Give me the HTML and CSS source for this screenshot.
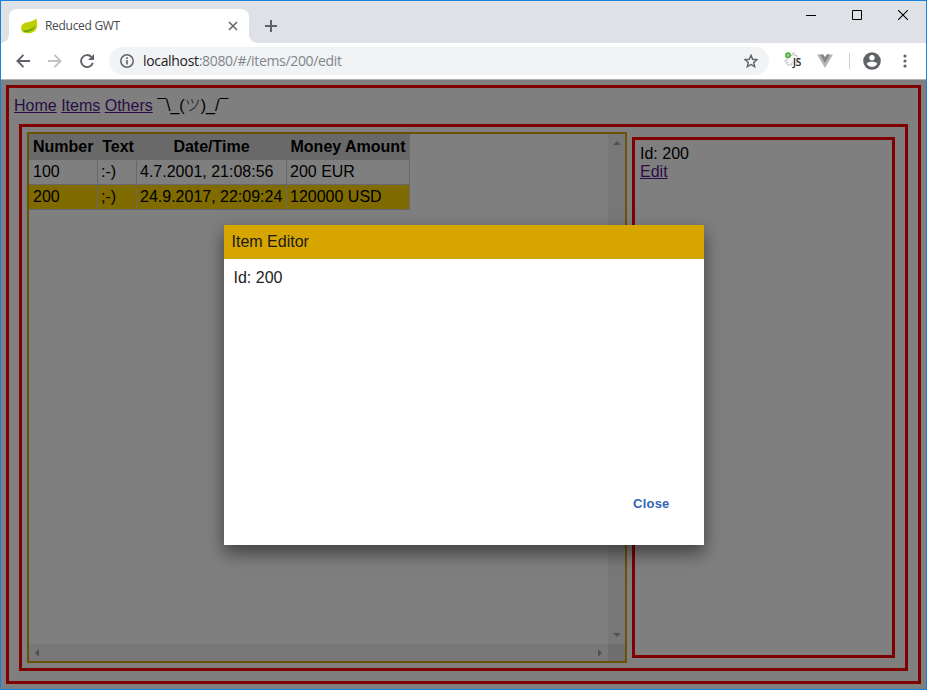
FILE: index.html
```
<!DOCTYPE html>
<html lang="en">
<head>
<meta charset="utf-8">
<title>Reduced GWT</title>
<link rel="stylesheet" href="styles.css">
</head>
<body>
<div class="window">
  <header class="titlebar">
    <div class="tab">
      <svg class="leaf" width="18" height="18" viewBox="0 0 18 18"><path d="M15.300 1.200c.9 3.600 1.700 9.300-.9 12.200-2.300 2.600-6.700 3-10.300 2.700C1.200 15.500-.3 13 .2 9.700 1.200 3.700 10.800 6.500 15.300 1.200z" fill="#bed000"/><path d="M2 13.600c5.200.2 10.500-1.700 12.500-6-1 5-5.200 7.700-10.800 7.300z" fill="#5d9b1f"/></svg>
      <span class="tab-title">Reduced GWT</span>
      <svg class="tab-close" width="10" height="10" viewBox="0 0 10 10"><path d="M1 1l8 8M9 1L1 9" stroke="#5f6368" stroke-width="1.500"/></svg>
    </div>
    <svg class="new-tab" width="12" height="12" viewBox="0 0 12 12"><path d="M6 0v12M0 6h12" stroke="#5f6368" stroke-width="2"/></svg>
    <div class="controls">
      <svg width="10" height="10" viewBox="0 0 10 10"><path d="M0 5.500h10" stroke="#000"/></svg>
      <svg width="10" height="10" viewBox="0 0 10 10"><path d="M.5.5h9v9h-9z" fill="none" stroke="#000"/></svg>
      <svg width="10" height="10" viewBox="0 0 10 10"><path d="M0 0l10 10M10 0L0 10" stroke="#000" stroke-width="1.100"/></svg>
    </div>
  </header>
  <div class="toolbar">
    <div class="nav-icons">
      <svg width="14" height="14" viewBox="0 0 14 14"><path d="M14 7H1.500M7.500.8L1.400 7l6.100 6.200" fill="none" stroke="#5f6368" stroke-width="1.900"/></svg>
      <svg width="14" height="14" viewBox="0 0 14 14"><path d="M0 7h12.500M6.500.8L12.600 7l-6.100 6.200" fill="none" stroke="#bfc1c3" stroke-width="1.900"/></svg>
      <svg width="14" height="14" viewBox="0 0 14 14"><path d="M12.800 8.900A6 6 0 1 1 11.400 2.900" fill="none" stroke="#5f6368" stroke-width="1.900"/><path d="M14 0v6H8z" fill="#5f6368"/></svg>
    </div>
    <div class="address">
      <svg width="14" height="14" viewBox="0 0 14 14"><circle cx="7" cy="7" r="6.200" fill="none" stroke="#5f6368" stroke-width="1.500"/><path d="M7 6v4.500M7 3.300v1.600" stroke="#5f6368" stroke-width="1.600"/></svg>
      <span class="url">localhost<span class="path">:8080/#/items/200/edit</span></span>
      <svg class="star" width="14" height="14" viewBox="0 0 14 14"><path d="M7 1.300l1.700 4 4.300.4-3.300 2.800 1 4.200L7 10.500l-3.700 2.200 1-4.200L1 5.700l4.300-.4z" fill="none" stroke="#5f6368" stroke-width="1.400"/></svg>
    </div>
    <svg class="ext-js" width="18" height="18" viewBox="0 0 18 18"><path d="M6 3.500h2.500q-.8-2.500 1-2.500t1 2.500H13V7q2.500-.8 2.500 1T13 9v4h-3q.5-2.500-1.200-2.500T8 13H3v-3q-2 .5-2-1t2-1V6" fill="#f7f7f7" stroke="#b0b0b0" stroke-dasharray="2 .7"/><circle cx="4" cy="3.300" r="3" fill="#4faf3d"/><circle cx="4" cy="3.300" r="1.500" fill="#8fd280"/><text x="9" y="14" class="js-label">JS</text></svg>
    <svg class="ext-vue" width="16" height="14" viewBox="0 0 16 14"><path d="M0 .5h6l2 3 2-3h6L8 14z" fill="#b5b5b5"/><path d="M3 .5h3.300L8 3.500 9.700.5H13L8 9z" fill="#858585"/></svg>
    <span class="divider"></span>
    <svg class="avatar" width="18" height="18" viewBox="0 0 18 18"><circle cx="9" cy="9" r="8.800" fill="#5f6368"/><circle cx="9" cy="5.700" r="2.700" fill="#fff"/><path d="M3.700 11.700C5 9.200 13 9.200 14.300 11.700 12.500 15.800 5.500 15.800 3.700 11.700z" fill="#fff"/></svg>
    <svg class="more" width="4" height="14" viewBox="0 0 4 14"><g fill="#5f6368"><circle cx="2" cy="2" r="1.600"/><circle cx="2" cy="7" r="1.600"/><circle cx="2" cy="12" r="1.600"/></g></svg>
  </div>
  <main class="page">
    <div class="app">
      <nav><a href="#">Home</a> <a href="#">Items</a> <a href="#">Others</a> <span class="shrug">¯\_(<span class="face">ツ</span>)_/¯</span></nav>
      <div class="content">
        <div class="list">
          <div class="list-body">
            <table>
              <colgroup><col class="c-number"><col class="c-text"><col class="c-date"><col class="c-money"></colgroup>
              <tr><th>Number</th><th>Text</th><th>Date/Time</th><th>Money Amount</th></tr>
              <tr><td>100</td><td>:-)</td><td>4.7.2001, 21:08:56</td><td>200 EUR</td></tr>
              <tr class="selected"><td>200</td><td>;-)</td><td>24.9.2017, 22:09:24</td><td>120000 USD</td></tr>
            </table>
          </div>
          <div class="vscroll"><i class="arrow up"></i><i class="arrow down"></i></div>
          <div class="hscroll"><i class="arrow left"></i><i class="arrow right"></i></div>
          <div class="corner"></div>
        </div>
        <div class="detail">Id: 200<br><a href="#">Edit</a></div>
      </div>
    </div>
    <div class="backdrop">
      <section class="dialog">
        <h1>Item Editor</h1>
        <div class="dialog-body">Id: 200</div>
        <footer><button>Close</button></footer>
      </section>
    </div>
  </main>
</div>
</body>
</html>
```
FILE: styles.css
```
* { box-sizing: border-box; }
body { margin: 0; font: 16px/18px "Liberation Sans", Arial, sans-serif; color: #000; overflow: hidden; }
svg { display: block; flex: none; }
a { color: #551a8b; }
.window { width: 927px; height: 690px; border: 1px solid #1a80d8; display: flex; flex-direction: column; }

.titlebar { height: 42px; background: #dee1e6; display: flex; align-items: flex-end; padding-left: 8px; }
.tab { width: 240px; height: 34px; background: #fff; border-radius: 8px 8px 0 0; display: flex; align-items: center; padding: 0 11px 0 12px; position: relative; }
.tab::before, .tab::after { content: ""; position: absolute; bottom: 0; width: 8px; height: 8px; }
.tab::before { left: -8px; background: radial-gradient(circle at 0 0, #dee1e6 7.5px, #fff 8px); }
.tab::after { right: -8px; background: radial-gradient(circle at 100% 0, #dee1e6 7.5px, #fff 8px); }
.tab-title { font: 12px/16px "Open Sans", sans-serif; letter-spacing: -.3px; color: #45494d; margin-left: 6px; flex: 1; }
.new-tab { margin: 0 0 11px 16px; }
.controls { margin-left: auto; align-self: flex-start; display: flex; gap: 36px; padding: 9px 18px 0 0; }

.toolbar { height: 37px; background: #fff; border-bottom: 1px solid #b2b2b2; display: flex; align-items: center; padding-left: 15px; }
.nav-icons { display: flex; gap: 18px; }
.address { flex: none; width: 660px; height: 28px; margin-left: 15px; border-radius: 14px; background: #f1f3f4; display: flex; align-items: center; padding: 0 11px; }
.url { font: 14px/20px "Open Sans", sans-serif; letter-spacing: -.33px; margin-left: 9px; color: #202124; }
.path { color: #80868b; }
.star { margin-left: auto; }
.ext-js { margin-left: 15px; overflow: visible; }
.js-label { font: 600 10px "Open Sans", sans-serif; letter-spacing: -.3px; fill: #222; }
.ext-vue { margin-left: 15px; }
.divider { width: 1px; height: 16px; background: #cdcfd1; margin-left: 16px; }
.avatar { margin-left: 13px; }
.more { margin-left: 22px; }

.page { flex: 1; position: relative; background: #fff; padding: 5px; }
.app { width: 915px; height: 599px; border: 3px solid #f00; padding: 9px 10px 10px; display: flex; flex-direction: column; }
nav { height: 27px; margin-left: -5px; white-space: nowrap; }
.shrug { font-family: "Liberation Sans", "Noto Sans CJK JP", sans-serif; }
.face { font-weight: 300; color: #333; }
.content { flex: 1; border: 3px solid #f00; padding: 5px 10px 5px 5px; display: flex; gap: 5px; }
.list { width: 600px; border: 2px solid #d6a500; display: grid; grid-template: 1fr 17px / 1fr 17px; }
.list-body { min-width: 0; }
.vscroll, .hscroll { background: #f1f1f1; display: flex; justify-content: space-between; align-items: center; }
.vscroll { flex-direction: column; padding: 7px 0; }
.hscroll { padding: 0 6px; }
.corner { background: #dcdcdc; }
.arrow { border: 4px solid transparent; }
.up { border-top: 0; border-bottom-color: #a3a3a3; }
.down { border-bottom: 0; border-top-color: #a3a3a3; }
.left { border-left: 0; border-right-color: #a3a3a3; }
.right { border-right: 0; border-left-color: #a3a3a3; }
table { border-spacing: 0; table-layout: fixed; width: 381px; }
.c-number { width: 69px; }
.c-text { width: 39px; }
.c-date { width: 150px; }
.c-money { width: 123px; }
th, td { height: 25px; padding: 0 2px 0 3px; border: solid #d3d3d8; border-width: 0 1px 1px 0; white-space: nowrap; text-align: left; }
th { height: 26px; background: #d3d3d3; text-align: center; padding-right: 3px; }
th:nth-child(2) { padding: 0 2px 0 4px; }
th:first-child, td:first-child { padding-left: 4px; }
th:first-child { text-align: left; }
.selected td { background: #ffd700; }
.detail { flex: 1; margin: 5px 0; border: 3px solid #f00; padding: 5px; }

.backdrop { position: absolute; inset: 0; background: rgba(0, 0, 0, .5); display: flex; justify-content: center; align-items: flex-start; padding-top: 145px; }
.dialog { width: 480px; height: 320px; background: #fff; display: flex; flex-direction: column; box-shadow: 0 8px 17px rgba(0, 0, 0, .5); }
h1 { margin: 0; height: 34px; padding: 8px; background: #d6a500; font: inherit; color: #1a1a1a; }
.dialog-body { flex: 1; padding: 10px; color: #222; }
footer { display: flex; justify-content: flex-end; padding: 0 34px 32px 0; }
button { border: 0; padding: 0; background: none; font: bold 13px/18px "Liberation Sans", Arial, sans-serif; letter-spacing: .2px; color: #3465b4; }
```
